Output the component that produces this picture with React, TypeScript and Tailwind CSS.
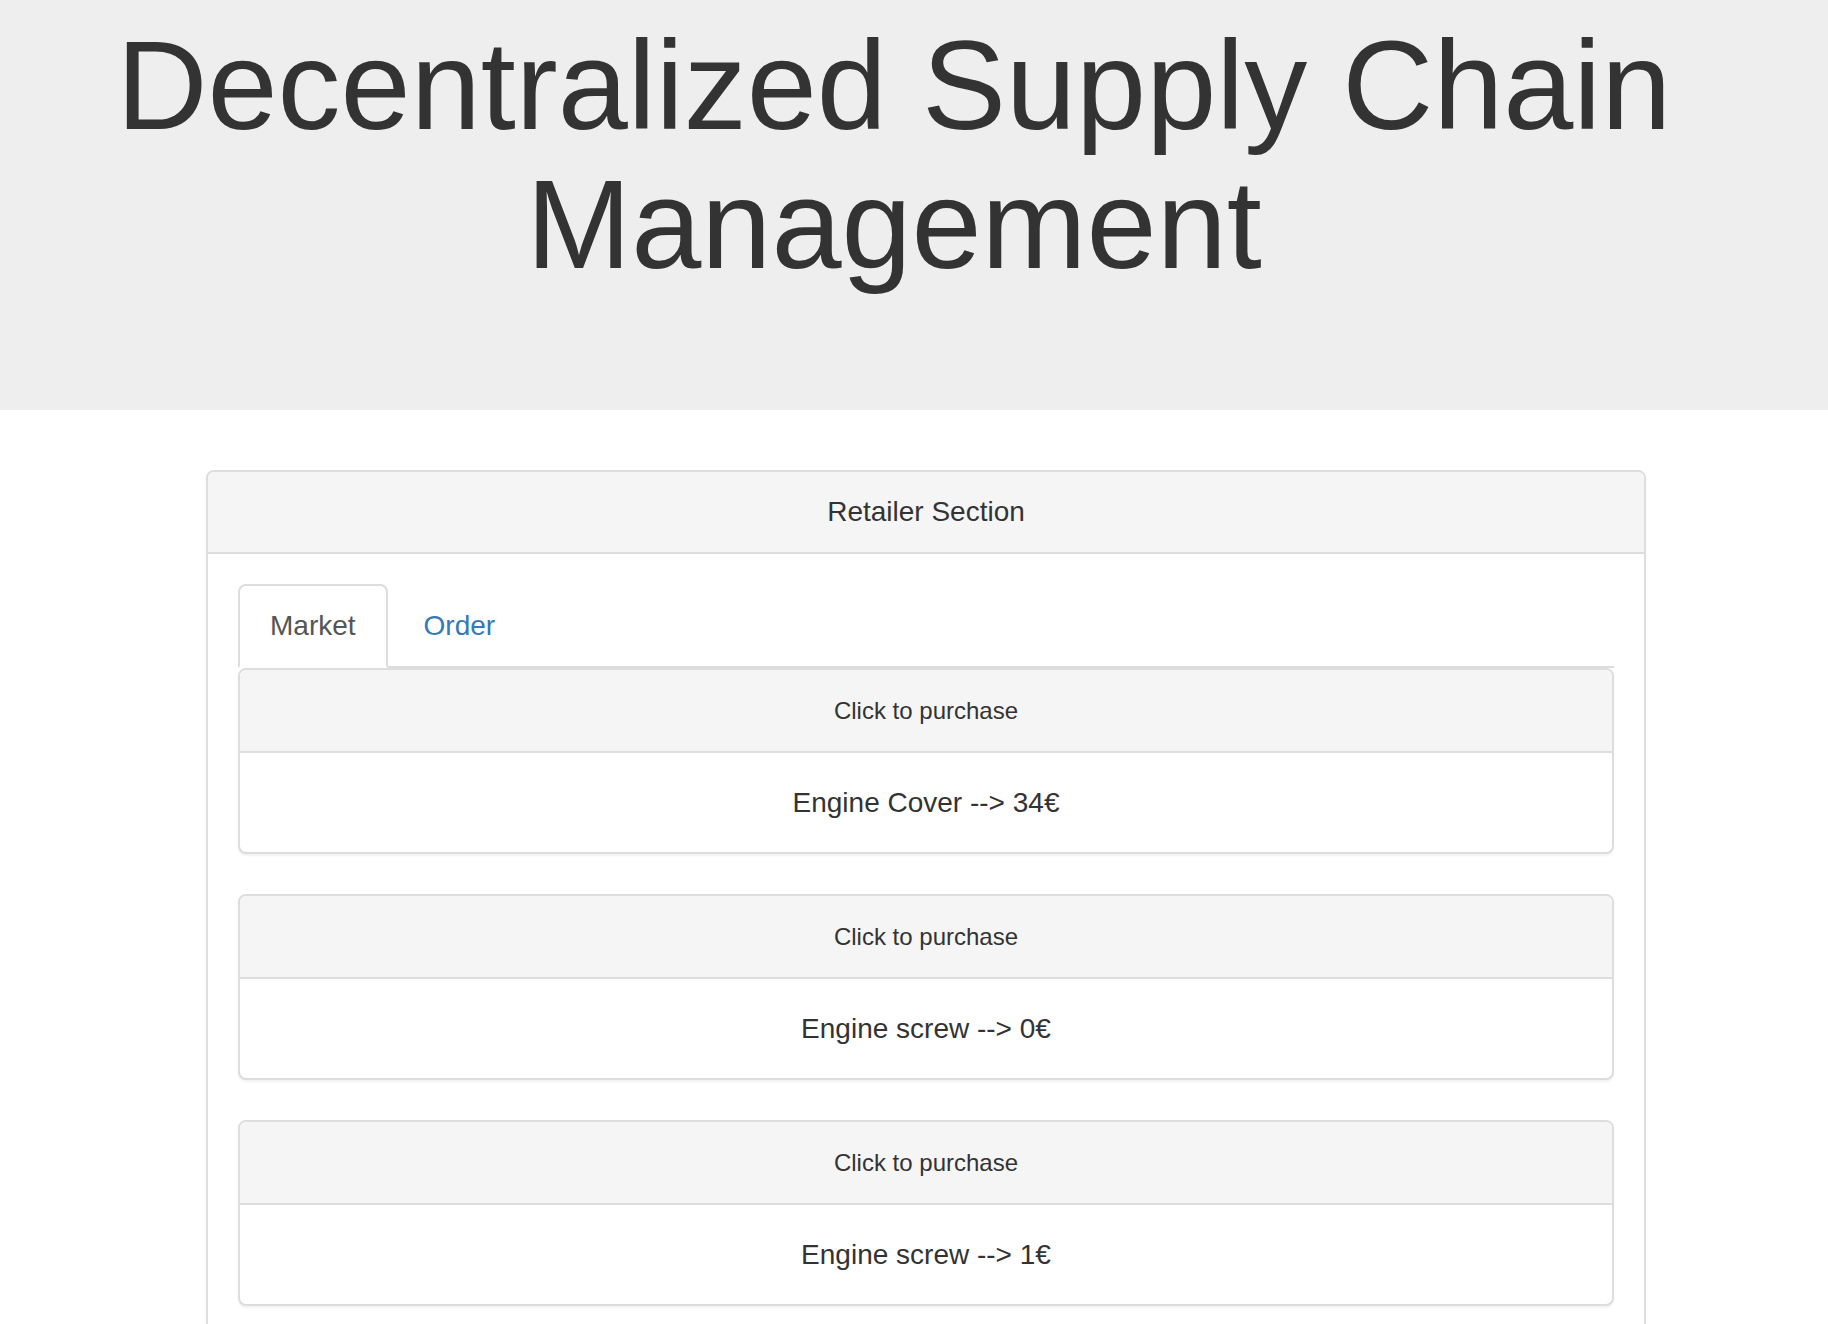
import React from "react";

const items = [
  "Engine Cover --> 34€",
  "Engine screw --> 0€",
  "Engine screw --> 1€",
];

export default function App() {
  return (
    <div className="min-h-[1324px] bg-white font-['Liberation_Sans',Arial,sans-serif] text-[#333]">
      <div className="bg-[#eee] pt-[17px] pb-[116px] pr-[40px]">
        <h1 className="m-0 text-center text-[126px] font-normal leading-[1.1] text-[#333]">
          Decentralized Supply Chain Management
        </h1>
      </div>

      <div className="ml-[206px] mt-[60px] w-[1440px] rounded-[8px] border-2 border-[#ddd] bg-white shadow-[0_2px_2px_rgba(0,0,0,0.05)]">
        <div className="rounded-t-[6px] border-b-2 border-[#ddd] bg-[#f5f5f5] px-[30px] py-[20px] text-center text-[28px] leading-[40px]">
          Retailer Section
        </div>
        <div className="p-[30px]">
          <ul className="m-0 flex list-none border-b-2 border-[#ddd] p-0">
            <li className="mb-[-2px]">
              <a className="mr-[4px] block rounded-t-[8px] border-2 border-[#ddd] border-b-transparent bg-white px-[30px] py-[20px] text-[28px] leading-[40px] text-[#555]">
                Market
              </a>
            </li>
            <li className="mb-[-2px]">
              <a className="mr-[4px] block rounded-t-[8px] border-2 border-transparent px-[30px] py-[20px] text-[28px] leading-[40px] text-[#337ab7]">
                Order
              </a>
            </li>
          </ul>
          <div>
            {items.map((it, i) => (
              <div
                key={i}
                className="mb-[40px] rounded-[8px] border-2 border-[#ddd] bg-white shadow-[0_2px_2px_rgba(0,0,0,0.05)]"
              >
                <div className="rounded-t-[6px] border-b-2 border-[#ddd] bg-[#f5f5f5] px-[30px] py-[20px] text-center text-[28px] leading-[40px]">
                  <span className="text-[24px]">Click to purchase</span>
                </div>
                <div className="px-[30px] pt-[30px] pb-[29px] text-center text-[28px] leading-[40px]">{it}</div>
              </div>
            ))}
          </div>
        </div>
      </div>
    </div>
  );
}
